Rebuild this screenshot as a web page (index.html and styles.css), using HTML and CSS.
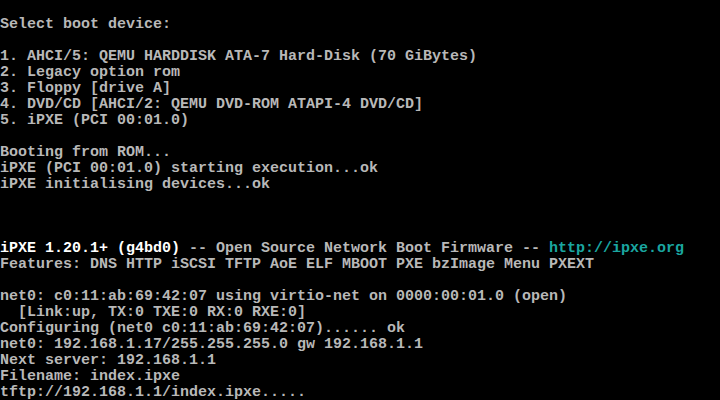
FILE: index.html
```html
<!DOCTYPE html>
<html>
<head>
<meta charset="utf-8">
<link rel="stylesheet" href="styles.css">
</head>
<body>
<div class="screen">
<div class="row"> </div>
<div class="row">Select boot device:</div>
<div class="row"> </div>
<div class="row">1. AHCI/5: QEMU HARDDISK ATA-7 Hard-Disk (70 GiBytes)</div>
<div class="row">2. Legacy option rom</div>
<div class="row">3. Floppy [drive A]</div>
<div class="row">4. DVD/CD [AHCI/2: QEMU DVD-ROM ATAPI-4 DVD/CD]</div>
<div class="row">5. iPXE (PCI 00:01.0)</div>
<div class="row"> </div>
<div class="row">Booting from ROM...</div>
<div class="row">iPXE (PCI 00:01.0) starting execution...ok</div>
<div class="row">iPXE initialising devices...ok</div>
<div class="row"> </div>
<div class="row"> </div>
<div class="row"> </div>
<div class="row"><span class="bright">iPXE 1.20.1+ (g4bd0)</span> -- Open Source Network Boot Firmware -- <span class="link">http://ipxe.org</span></div>
<div class="row">Features: DNS HTTP iSCSI TFTP AoE ELF MBOOT PXE bzImage Menu PXEXT</div>
<div class="row"> </div>
<div class="row">net0: c0:11:ab:69:42:07 using virtio-net on 0000:00:01.0 (open)</div>
<div class="row">  [Link:up, TX:0 TXE:0 RX:0 RXE:0]</div>
<div class="row">Configuring (net0 c0:11:ab:69:42:07)...... ok</div>
<div class="row">net0: 192.168.1.17/255.255.255.0 gw 192.168.1.1</div>
<div class="row">Next server: 192.168.1.1</div>
<div class="row">Filename: index.ipxe</div>
<div class="row">tftp://192.168.1.1/index.ipxe.....</div>
</div>
</body>
</html>
```
FILE: styles.css
```css
html, body {
  margin: 0;
  padding: 0;
  background: #000;
}
.screen {
  box-sizing: border-box;
  width: 720px;
  height: 400px;
  padding-top: 1px;
  overflow: hidden;
  background: #000;
  color: #b8b8b8;
  font-family: "Liberation Mono", "DejaVu Sans Mono", monospace;
  font-size: 15px;
  font-weight: bold;
  display: flex;
  flex-direction: column;
}
.row {
  flex: none;
  height: 16px;
  line-height: 16px;
  white-space: pre;
}
.bright {
  color: #ffffff;
}
.link {
  color: #1aa6a0;
}
```
